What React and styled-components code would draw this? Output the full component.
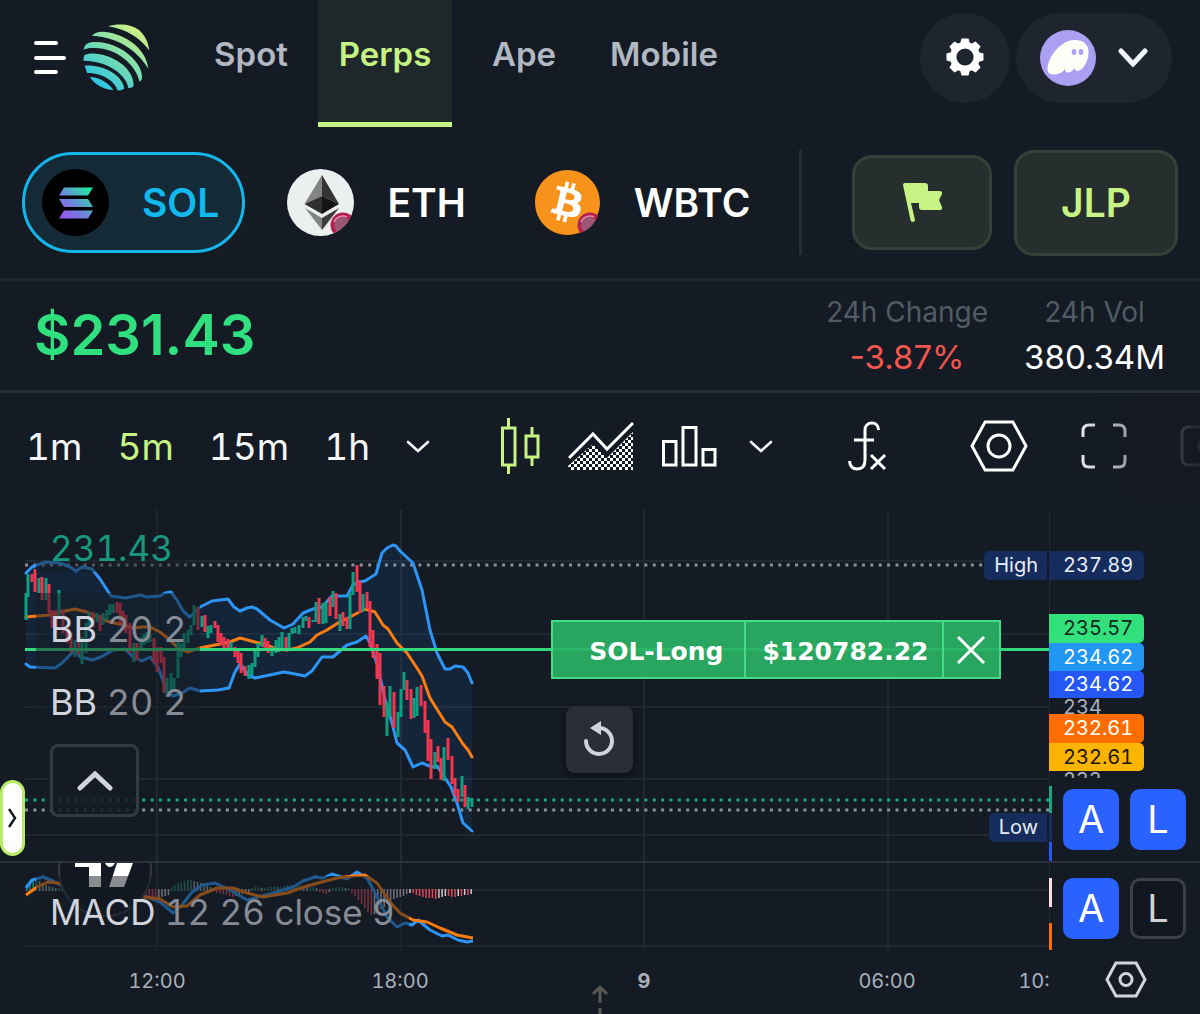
import React from 'react';
import styled, { createGlobalStyle } from 'styled-components';
import { FaBitcoin } from 'react-icons/fa';

const GlobalStyle = createGlobalStyle`
  :root {
    --bg: #141b24;
    --lime: #c7f284;
    --grid: #202832;
    --blue: #2962ff;
    --up: #0f9f80;
    --down: #f23650;
    --muted: #b2b8c2;
  }

  * {
    box-sizing: border-box;
  }

  body {
    margin: 0;
    background: var(--bg);
    color: #fff;
    font-family: Inter, 'Liberation Sans', sans-serif;
    font-optical-sizing: none;
  }

  button {
    font: inherit;
    color: inherit;
    background: none;
    border: 0;
    padding: 0;
    margin: 0;
    cursor: pointer;
  }

  a {
    color: inherit;
    text-decoration: none;
  }

  svg {
    display: block;
    flex-shrink: 0;
  }
`;

const Page = styled.div`
  display: flex;
  flex-direction: column;
  overflow: hidden;
`;

/* Header */

const Header = styled.header`
  display: flex;
  align-items: flex-start;
  height: 127px;
  padding: 0 28px 0 33px;
`;

const Brand = styled.div`
  display: flex;
  align-items: center;
  gap: 16px;
  height: 115px;
  margin-right: 34px;
`;

const Nav = styled.nav`
  display: grid;
  grid-template-columns: 134px 134px 144px 136px;
`;

const NavLink = styled.a`
  display: flex;
  align-items: center;
  justify-content: center;
  height: 127px;
  padding-bottom: 15px;
  border-bottom: 5px solid ${({ $active }) => ($active ? 'var(--lime)' : 'transparent')};
  background: ${({ $active }) => ($active ? '#1e282b' : 'transparent')};
  color: ${({ $active }) => ($active ? 'var(--lime)' : 'var(--muted)')};
  font-size: 33px;
  font-weight: 600;
`;

const Actions = styled.div`
  display: flex;
  align-items: center;
  gap: 6px;
  height: 115px;
  margin-left: auto;
`;

const RoundButton = styled.button`
  display: flex;
  align-items: center;
  justify-content: center;
  gap: 22px;
  width: ${({ $wide }) => ($wide ? '156px' : '90px')};
  height: 90px;
  border-radius: 45px;
  background: #1e252f;
`;

/* Token row */

const TokenRow = styled.div`
  display: flex;
  align-items: center;
  height: 154px;
  padding: 2px 22px;
  border-bottom: 3px solid #1e262f;
`;

const Tokens = styled.div`
  display: flex;
  gap: 22px;
`;

const Token = styled.button`
  display: flex;
  align-items: center;
  gap: 33px;
  height: 101px;
  padding: 0 23px 0 17px;
  border: 3px solid ${({ $active }) => ($active ? '#15b5ea' : 'transparent')};
  border-radius: 51px;
  background: ${({ $active }) => ($active ? '#142b37' : 'transparent')};
  color: ${({ $active }) => ($active ? '#12b9ee' : '#fff')};
  font-size: 39px;
  font-weight: 600;
`;

const TokenActions = styled.div`
  display: flex;
  align-items: center;
  gap: 22px;
  margin-left: auto;
`;

const Divider = styled.span`
  width: 3px;
  height: 105px;
  margin-right: 28px;
  background: #252d37;
`;

const LimeButton = styled.button`
  display: flex;
  align-items: center;
  justify-content: center;
  width: ${({ $large }) => ($large ? '164px' : '140px')};
  height: ${({ $large }) => ($large ? '106px' : '95px')};
  border: 3px solid #364038;
  border-radius: 20px;
  background: #262f2d;
  color: var(--lime);
  font-size: 39px;
  font-weight: 600;
`;

/* Price row */

const PriceRow = styled.section`
  display: flex;
  align-items: center;
  justify-content: space-between;
  height: 112px;
  padding: 0 35px 2px 34px;
  border-bottom: 3px solid #262e37;
`;

const Price = styled.h1`
  margin: 0;
  color: #30e07e;
  font-size: 56px;
  font-weight: 600;
`;

const Stats = styled.div`
  display: flex;
  gap: 36px;
  line-height: 45px;
`;

const Stat = styled.div`
  display: flex;
  flex-direction: column;
  align-items: center;
`;

const StatLabel = styled.span`
  color: #515b66;
  font-size: 28px;
`;

const StatValue = styled.span`
  color: ${({ $down }) => ($down ? '#f3554f' : '#fff')};
  font-size: 33px;
`;

/* Chart toolbar */

const Toolbar = styled.div`
  position: relative;
  display: flex;
  align-items: center;
  height: 117px;
  padding: 0 0 11px 26px;
  overflow: hidden;

  &::after {
    content: '';
    position: absolute;
    top: 0;
    right: 0;
    width: 120px;
    height: 106px;
    background: linear-gradient(to right, rgb(20 24 33 / 0), rgb(20 24 33 / 0.9));
    pointer-events: none;
  }
`;

const ToolGroup = styled.div`
  display: flex;
  align-items: center;
  flex-shrink: 0;
  gap: ${({ $gap }) => $gap};
  width: ${({ $width }) => $width};
`;

const Interval = styled.button`
  color: ${({ $active }) => ($active ? 'var(--lime)' : '#f4f5f7')};
  font-size: 37px;
  font-variant-numeric: tabular-nums;
`;

/* Chart */

const ChartGrid = styled.main`
  position: relative;
  display: grid;
  grid-template-columns: 1fr 151px;
  grid-template-rows: 353px 87px 64px;
  font-variant-numeric: tabular-nums;
`;

const Pane = styled.div`
  position: relative;
  overflow: hidden;
  border-bottom: ${({ $last }) => ($last ? '0' : '2px solid #2a313b')};

  > svg {
    width: 100%;
    height: 100%;
  }
`;

const Axis = styled.div`
  position: relative;
  box-shadow: inset 1px 0 #222a34;
  border-bottom: ${({ $last }) => ($last ? '0' : '2px solid #2a313b')};
`;

const Legend = styled.div`
  position: absolute;
  top: ${({ $top }) => $top};
  left: 36px;
  display: flex;
  flex-direction: column;
  align-items: flex-start;
`;

const LegendRow = styled.div`
  height: 73px;
  padding: 0 14px;
  background: rgb(20 27 36 / 0.5);
  color: #868b95;
  font-size: ${({ $compact }) => ($compact ? '35px' : '36px')};
  line-height: 73px;
  white-space: nowrap;

  b {
    color: #d1d4dc;
    font-weight: 400;
  }
`;

const LastPrice = styled(LegendRow)`
  height: 48px;
  margin-bottom: 21px;
  color: #18987f;
  line-height: 48px;
`;

const CollapseButton = styled.button`
  display: flex;
  align-items: center;
  justify-content: center;
  width: 89px;
  height: 73px;
  margin: 5px 0 0 14px;
  border: 3px solid #343a45;
  border-radius: 8px;
  background: rgb(20 27 36 / 0.85);
`;

const Order = styled.div`
  position: absolute;
  top: 110px;
  left: calc(50% + 26px);
  display: flex;
  height: 59px;
  background: rgb(42 178 101 / 0.92);
  font: bold 25px 'DejaVu Sans', sans-serif;
`;

const OrderCell = styled.div`
  display: flex;
  align-items: center;
  justify-content: flex-end;
  width: ${({ $width }) => $width};
  padding: 3px ${({ $first }) => ($first ? '20px' : '13px')} 0 0;
  border: 2px solid #45dc88;
  border-left-width: ${({ $first }) => ($first ? '2px' : '0')};
`;

const CloseOrder = styled.button`
  display: flex;
  align-items: center;
  justify-content: center;
  width: 57px;
  border: 2px solid #45dc88;
  border-left: 0;
`;

const ResetButton = styled.button`
  position: absolute;
  top: 196px;
  left: calc(50% + 41px);
  display: flex;
  align-items: center;
  justify-content: center;
  width: 67px;
  height: 67px;
  border-radius: 9px;
  background: #2a2e39;
  box-shadow: 0 3px 8px rgb(0 0 0 / 0.45);
`;

const RangeTag = styled.span`
  position: absolute;
  top: ${({ $top }) => $top};
  right: 2px;
  height: 29px;
  padding: 0 9px 0 10px;
  border-radius: 5px 0 0 5px;
  background: #152c5c;
  color: #e8edf7;
  font-size: 20px;
  line-height: 29px;
`;

const PriceTag = styled.span`
  position: absolute;
  top: ${({ $top }) => $top};
  left: 0;
  width: 95px;
  height: ${({ $height }) => $height || '29px'};
  padding-left: 14px;
  border-radius: 0 5px 5px 0;
  overflow: hidden;
  background: ${({ $bg }) => $bg || 'transparent'};
  color: ${({ $color }) => $color || '#fff'};
  font-size: 20px;
  line-height: ${({ $line }) => $line || '29px'};
`;

const AxisMark = styled.span`
  position: absolute;
  top: ${({ $top }) => $top};
  left: 0;
  width: 3px;
  height: ${({ $height }) => $height};
  background: ${({ $bg }) => $bg};
`;

const ScaleButtons = styled.div`
  position: absolute;
  top: ${({ $top }) => $top};
  left: 14px;
  display: flex;
  gap: 11px;
`;

const ScaleButton = styled.button`
  width: 56px;
  height: 61px;
  border: 3px solid ${({ $on }) => ($on ? 'var(--blue)' : '#3b3f4a')};
  border-radius: 10px;
  background: ${({ $on }) => ($on ? 'var(--blue)' : '#12161f')};
  color: ${({ $on }) => ($on ? '#fff' : '#cfd2da')};
  font-size: 38px;
  line-height: 55px;
`;

const TimeAxis = styled.div`
  position: relative;
  overflow: hidden;
`;

const TimeLabel = styled.span`
  position: absolute;
  top: 18px;
  left: ${({ $left }) => $left};
  transform: translateX(-50%);
  color: #aab0ba;
  font-size: 20px;
  font-weight: ${({ $bold }) => ($bold ? 700 : 400)};
  line-height: 26px;
`;

const ScrollHint = styled.svg`
  position: absolute;
  bottom: 0;
  left: 590px;
`;

const AxisCorner = styled.div`
  display: flex;
  align-items: flex-start;
  padding: 11px 0 0 56px;
`;

const DrawerHandle = styled.button`
  position: absolute;
  top: 270px;
  left: 0;
  display: flex;
  align-items: center;
  justify-content: center;
  width: 25px;
  height: 76px;
  border: 3px solid #b9ec66;
  border-radius: 13px;
  background: #fff;
`;

/* Icons */

const JupiterLogo = () => (
  <svg width="67" height="67" viewBox="190 43 200 200">
    <defs>
      <linearGradient id="jup" gradientUnits="userSpaceOnUse" x1="225" y1="230" x2="355" y2="60">
        <stop offset="0.05" stopColor="#2cc5e6" />
        <stop offset="0.5" stopColor="#76dcb0" />
        <stop offset="1" stopColor="#d0f084" />
      </linearGradient>
    </defs>
    <g fill="url(#jup)">
      <path d="M265 50C295 40 335 43 358 62C375 78 385 98 388 122C362 88 325 60 265 50Z" />
      <path d="M217 78C226 65 245 64 268 68C328 80 380 122 385 177C356 128 300 82 217 78Z" />
      <path d="M192 120C194 104 204 98 222 97C292 92 372 155 366 207L359 216C348 165 292 116 225 115C210 114 200 116 192 120Z" />
      <path d="M191 153L193 137C204 131 216 130 228 132C292 138 344 184 341 228Q334 236 325 233C319 196 266 154 191 153Z" />
      <path d="M195 167C252 164 309 196 313 236Q303 243 293 241C287 216 250 188 202 189Z" />
      <path d="M210 201C237 201 264 217 281 240C252 239 226 224 210 201Z" />
    </g>
  </svg>
);

const MenuIcon = () => (
  <svg width="34" height="36" fill="none" stroke="#fff" strokeWidth="4" strokeLinecap="round">
    <path d="M3 3H23M3 18H31M3 32H23" />
  </svg>
);

const GearIcon = () => (
  <svg width="38" height="40" viewBox="-19 -19 38 40">
    <circle r="11.800" fill="none" stroke="#fff" strokeWidth="6.400" />
    {[0, 45, 90, 135, 180, 225, 270, 315].map((angle) => (
      <path key={angle} d="M-5 -13L-3.500 -18.500H3.500L5 -13Z" fill="#fff" transform={`rotate(${angle})`} />
    ))}
  </svg>
);

const GhostAvatar = () => (
  <svg width="56" height="56">
    <circle cx="28" cy="28" r="28" fill="#ab9ff2" />
    <path
      d="M7.500 39C8 28 19 11 34 10C44 9.500 49 15 48.500 23C48 33 42 41 37.500 41C35.500 41 34.500 39.500 34.700 38C32.500 41 30 43 27.500 42.500C25.500 42 25 40.500 25.200 39C22 43 17 45 12 44.500C9 44 7.300 42 7.500 39Z"
      fill="#fffdf8"
    />
    <ellipse cx="34" cy="22" rx="2.300" ry="3" fill="#ab9ff2" />
    <ellipse cx="41" cy="22" rx="2.300" ry="3" fill="#ab9ff2" />
  </svg>
);

const Chevron = ({ width = 22, height = 11, weight = 2.6, color = '#f4f5f7', up }) => (
  <svg width={width + 4} height={height + 4} fill="none" stroke={color} strokeWidth={weight} strokeLinecap="round">
    <path
      d={
        up
          ? `M3 ${height + 1}L${width / 2 + 2} 3L${width + 1} ${height + 1}`
          : `M3 3L${width / 2 + 2} ${height + 1}L${width + 1} 3`
      }
    />
  </svg>
);

const SolIcon = () => (
  <svg width="67" height="67">
    <defs>
      <linearGradient id="sol" gradientUnits="userSpaceOnUse" x1="18" y1="50" x2="48" y2="18">
        <stop offset="0" stopColor="#a04cf5" />
        <stop offset="0.45" stopColor="#6f83dd" />
        <stop offset="1" stopColor="#19f39c" />
      </linearGradient>
    </defs>
    <circle cx="33.500" cy="33.500" r="33.500" fill="#000" />
    <path
      d="M22 18.500H51L46 26.500H17ZM17 30H46L51 38H22ZM22 41.500H51L46 49.500H17Z"
      fill="url(#sol)"
    />
  </svg>
);

const BridgeBadge = () => (
  <g>
    <circle cx="56" cy="56" r="12.500" fill="#b3204f" />
    <circle cx="55" cy="56" r="8" fill="#9c5674" />
    <path d="M47 53A9.500 9.500 0 0 1 60 48" fill="none" stroke="#e18aa6" strokeWidth="1.500" />
  </g>
);

const EthIcon = () => (
  <svg width="67" height="67">
    <clipPath id="coin">
      <circle cx="33.500" cy="33.500" r="33.500" />
    </clipPath>
    <g clipPath="url(#coin)">
      <rect width="67" height="67" fill="#eceff0" />
      <path d="M35 6V27L17.500 35Z" fill="#828384" />
      <path d="M35 6V27L52 35Z" fill="#343434" />
      <path d="M17.500 35L35 27V45Z" fill="#2f3030" />
      <path d="M52 35L35 27V45Z" fill="#141414" />
      <path d="M18 39L35 49V61Z" fill="#828384" />
      <path d="M52 39L35 49V61Z" fill="#3c3c3b" />
      <BridgeBadge />
    </g>
  </svg>
);

const BtcIcon = () => (
  <svg width="67" height="67">
    <g clipPath="url(#coin)">
      <rect x="4" y="4" width="59" height="59" rx="29" fill="#fff" />
      <FaBitcoin size={67} color="#f7931a" />
      <BridgeBadge />
    </g>
  </svg>
);

const FlagIcon = () => (
  <svg width="40" height="41" fill="var(--lime)">
    <path d="M1 3Q1 1 3 1H23Q26 1 26 4V9H37Q41 9 40 12L37 18L40 25Q41 28 38 28H20Q17 28 17 25V21H9L13 38Q13 40 10.500 40Q9 40 8.500 38Z" />
  </svg>
);

const CandlesIcon = () => (
  <svg width="40" height="56" fill="none" stroke="var(--lime)" strokeWidth="3">
    <path d="M2.500 10H15V47H2.500ZM8.500 0V9M8.500 48V56M26 18H38V39H26ZM32 9V17M32 40V48" />
  </svg>
);

const AreaIcon = () => (
  <svg width="66" height="49">
    <pattern id="checks" width="6" height="6" patternUnits="userSpaceOnUse">
      <path d="M0 0H3V3H0ZM3 3H6V6H3Z" fill="#fff" />
    </pattern>
    <path d="M0 48V44L25 22L39 36L65 10V48Z" fill="url(#checks)" />
    <path d="M1 36L25 12L39 27L65 1" fill="none" stroke="#fff" strokeWidth="3" />
  </svg>
);

const BarsIcon = () => (
  <svg width="55" height="41" fill="none" stroke="#fff" strokeWidth="3">
    <path d="M1.500 15.500H14V39H1.500ZM21 1.500H34V39H21ZM41 23.500H53V39H41Z" />
  </svg>
);

const FxIcon = () => (
  <svg width="39" height="50" fill="none" stroke="#fff" strokeWidth="3">
    <path d="M30.500 9C30.500 4 27 2 24 2C19.500 2 17 5 17 9V39C17 45 14 48 9 48C4.500 48 2 45 1.500 40M6 19H26M23 34L37 48M37 34L23 48" />
  </svg>
);

const HexIcon = ({ width = 58, height = 52, inner = 11, color = '#fff', weight = 3 }) => (
  <svg width={width} height={height} fill="none" stroke={color} strokeWidth={weight}>
    <path
      d={`M2 ${height / 2}L${width * 0.26} 2H${width * 0.74}L${width - 2} ${height / 2}L${width * 0.74} ${height - 2}H${width * 0.26}Z`}
    />
    <circle cx={width / 2} cy={height / 2} r={inner} />
  </svg>
);

const FullscreenIcon = () => (
  <svg width="46" height="46" fill="none" stroke="#e6e8ec" strokeWidth="3">
    <path d="M14 2H8Q2 2 2 8V14M32 2H38Q44 2 44 8V14M14 44H8Q2 44 2 38V32M32 44H38Q44 44 44 38V32" />
  </svg>
);

const CameraIcon = () => (
  <svg width="54" height="42" fill="none" stroke="#a0a5ae" strokeWidth="3">
    <rect x="2" y="2" width="50" height="38" rx="6" />
    <circle cx="27" cy="21" r="8" />
  </svg>
);

const ResetIcon = () => (
  <svg width="34" height="40" viewBox="0 0 34 40">
    <path d="M4 21A13 13 0 1 0 17 8" fill="none" stroke="#d1d4dc" strokeWidth="4" strokeLinecap="round" />
    <path d="M19 1V15L8 8Z" fill="#d1d4dc" />
  </svg>
);

const CloseIcon = () => (
  <svg width="28" height="28" stroke="#fff" strokeWidth="3">
    <path d="M1 1L27 27M27 1L1 27" />
  </svg>
);

/* Chart data */

const upperBand =
  '26,63 32,57 45,52 60,53 70,57 76,61 82,57 92,59 100,69 111,86 126,88 140,85 147,87 160,86 165,83 171,82 177,90 183,101 190,107 200,97 212,91 228,89 234,97 240,101 247,98 252,97 257,99 270,110 284,118 293,114 303,103 313,99 322,97 332,86 347,86 353,75 358,72 365,71 376,64 382,43 387,38 393,35 396,36 400,41 413,53 422,80 430,120 437,143 445,159 450,159 455,156 463,157 468,163 472,173';
const lowerBand =
  '26,154 30,157 55,158 62,153 75,140 80,147 93,150 103,146 113,140 125,139 133,147 142,151 150,147 158,157 167,182 173,186 182,183 190,178 200,181 218,180 229,178 235,162 240,154 248,165 255,168 270,165 284,162 295,164 305,166 312,161 322,147 333,147 347,135 357,132 366,126 370,133 378,157 385,190 392,213 397,233 405,240 413,257 422,253 432,257 437,256 443,265 451,277 457,293 463,313 472,321';
const basis =
  '26,107 37,106 50,105 60,102 75,99 87,102 100,108 110,112 123,115 133,118 143,117 150,117 160,122 170,130 178,138 187,142 200,138 220,134 230,132 240,128 255,132 263,134 277,139 287,140 297,138 310,132 317,125 327,120 338,113 350,107 365,99 375,102 383,115 388,119 397,133 407,143 417,158 422,166 430,188 445,212 452,217 463,234 468,240 472,247';

// [x, high, low, rising]
const candles = [
  [26, 83, 110, 1], [28, 64, 87, 1], [32, 64, 72, 0], [35, 59, 82, 0], [39, 68, 83, 1], [42, 67, 90, 0],
  [46, 68, 90, 1], [49, 74, 103, 0], [52, 100, 118, 0], [56, 100, 123, 0], [59, 80, 108, 1], [63, 99, 123, 0],
  [67, 115, 133, 0], [71, 123, 143, 0], [75, 130, 147, 1], [79, 125, 145, 0], [82, 127, 154, 1], [86, 113, 143, 1],
  [89, 102, 117, 1], [93, 102, 117, 0], [97, 103, 112, 1], [100, 105, 121, 0], [103, 103, 115, 1], [107, 100, 110, 1],
  [110, 94, 105, 1], [113, 94, 103, 1], [117, 92, 103, 0], [120, 93, 113, 0], [123, 101, 115, 0], [126, 105, 123, 0],
  [130, 113, 143, 0], [134, 133, 152, 1], [137, 133, 150, 0], [141, 127, 140, 1], [144, 124, 135, 1], [147, 122, 133, 1],
  [150, 125, 132, 1], [154, 128, 153, 0], [157, 137, 162, 0], [161, 137, 153, 0], [164, 147, 183, 0], [167, 168, 187, 1],
  [171, 163, 180, 1], [174, 168, 182, 1], [178, 132, 168, 1], [181, 133, 147, 1], [184, 123, 138, 1], [188, 120, 133, 1],
  [191, 115, 125, 1], [194, 95, 115, 1], [198, 97, 120, 0], [202, 106, 117, 1], [205, 105, 122, 0], [208, 116, 128, 1],
  [211, 115, 123, 1], [215, 111, 118, 0], [218, 115, 132, 0], [221, 123, 135, 0], [224, 127, 139, 0], [228, 129, 140, 0],
  [231, 132, 138, 1], [235, 137, 147, 0], [238, 141, 153, 0], [241, 143, 163, 0], [245, 156, 166, 0], [249, 155, 169, 1],
  [252, 153, 165, 1], [255, 140, 157, 1], [258, 133, 147, 1], [262, 125, 137, 1], [265, 128, 138, 0], [268, 131, 143, 0],
  [272, 137, 146, 1], [276, 130, 143, 1], [279, 127, 142, 1], [282, 122, 138, 1], [286, 127, 140, 0], [289, 123, 140, 1],
  [292, 118, 124, 1], [295, 117, 123, 1], [299, 115, 124, 1], [303, 107, 118, 1], [306, 106, 111, 1], [309, 107, 118, 0],
  [313, 110, 112, 1], [316, 92, 112, 1], [319, 88, 114, 0], [323, 93, 114, 1], [326, 92, 113, 1], [330, 87, 106, 0],
  [333, 81, 97, 1], [336, 83, 109, 0], [340, 104, 121, 1], [343, 102, 116, 0], [347, 107, 119, 0], [350, 83, 119, 1],
  [353, 62, 85, 1], [357, 55, 82, 0], [360, 71, 103, 0], [363, 84, 102, 1], [367, 82, 99, 0], [370, 91, 137, 0],
  [373, 120, 148, 0], [377, 134, 169, 0], [380, 143, 195, 0], [384, 176, 207, 0], [387, 192, 226, 1], [390, 176, 207, 1],
  [394, 182, 218, 0], [398, 202, 227, 1], [401, 179, 207, 1], [404, 162, 180, 1], [407, 170, 190, 0], [411, 179, 209, 0],
  [414, 188, 208, 1], [417, 177, 206, 1], [421, 175, 196, 0], [425, 191, 223, 0], [428, 210, 251, 0], [431, 229, 269, 0],
  [435, 242, 259, 1], [438, 236, 252, 0], [441, 248, 270, 0], [444, 237, 271, 1], [448, 228, 250, 0], [452, 246, 274, 0],
  [455, 268, 286, 0], [458, 279, 292, 0], [462, 266, 287, 1], [465, 275, 297, 0], [468, 287, 299, 1], [472, 288, 297, 1],
];

const macdLine =
  '26,25 32,17 43,14 53,18 66,25 80,29 147,34 160,39 173,50 182,42 192,29 202,22 215,20 230,27 247,37 258,34 277,29 293,24 303,18 315,14 323,15 332,11 347,16 357,9 367,15 375,30 387,54 397,64 405,60 412,62 418,57 430,67 442,73 448,72 458,77 467,79 473,78';
const signalLine =
  '26,32 37,24 48,19 58,20 80,27 145,34 160,36 173,44 187,43 200,32 217,25 233,25 247,30 263,34 287,30 307,23 337,15 353,13 365,12 377,20 390,39 400,50 413,57 427,59 440,65 457,72 473,75';

// Signed bar heights, positive values are above the zero line
const histogram = [
  6, 9, 11, 12, 9, 6, 5, 4, 3, 2, 2, 1, -2, -3, -4, -5, -6, -6, -5, -5, -4, -4, -3, -3, -3, -3, -4, -4, -5, -4, -3,
  -4, -4, -4, -5, -5, -5, -6, -7, -8, -9, -8, -7, -6, -5, 3, 5, 7, 8, 9, 10, 10, 9, 8, 7, 6, 5, 3, 2, -3, -3, -4,
  -5, -6, -7, -6, -5, -4, -3, -2, 2, 3, 3, 2, 2, 3, 3, 4, 3, 3, 4, 5, 5, 4, 5, 5, 4, 3, 3, 3, 2, -2, -3, -4, -2, 2,
  2, 3, 3, 2, 2, -3, -6, -10, -14, -18, -22, -25, -24, -22, -19, -17, -14, -12, -9, -8, -7, -6, -4, -3, -3, -5, -6,
  -7, -8, -8, -8, -9, -8, -7, -6, -6, -7, -7, -6, -6, -5, -5, -4,
];

const barColor = (value, previous) => {
  if (value > 0) return value >= previous ? '#26806f' : '#8fa8a6';
  return value <= previous ? '#d9485a' : '#d8c3c8';
};

const verticals = [157, 401, 644, 888];

const PricePlot = () => (
  <svg>
    <g stroke="var(--grid)" strokeWidth="2">
      {verticals.map((x) => (
        <line key={x} x1={x} x2={x} y1="0" y2="100%" />
      ))}
      {[51, 124, 197, 269, 325].map((y) => (
        <line key={y} x1="25" x2="100%" y1={y} y2={y} />
      ))}
    </g>
    <polygon
      points={`${upperBand} ${lowerBand.split(' ').reverse().join(' ')}`}
      fill="rgb(33 130 243 / 0.1)"
    />
    <g fill="none" strokeWidth="3" strokeDasharray="3 5.370">
      <line x1="25" x2="984" y1="55" y2="55" stroke="#8b919b" />
      <line x1="25" x2="100%" y1="290" y2="290" stroke="#16a685" />
      <line x1="25" x2="100%" y1="300" y2="300" stroke="#8b919b" />
    </g>
    <g fill="none" strokeWidth="3" strokeLinejoin="round" strokeLinecap="round">
      <polyline points={upperBand} stroke="#2d95f5" />
      <polyline points={lowerBand} stroke="#2d95f5" />
      <polyline points={basis} stroke="#fb7c12" />
    </g>
    {candles.map(([x, high, low, rising]) => (
      <rect
        key={x}
        x={x - 1.5}
        y={high}
        width="3"
        height={low - high}
        fill={rising ? 'var(--up)' : 'var(--down)'}
      />
    ))}
    <line x1="25" x2="100%" y1="139.500" y2="139.500" stroke="#36d87d" strokeWidth="3" />
  </svg>
);

const MacdPlot = () => (
  <svg>
    <g stroke="var(--grid)" strokeWidth="2">
      {verticals.map((x) => (
        <line key={x} x1={x} x2={x} y1="0" y2="100%" />
      ))}
      <line x1="25" x2="100%" y1="27" y2="27" />
      <line x1="25" x2="100%" y1="83" y2="83" />
    </g>
    {histogram.map((value, i) => (
      <rect
        key={i}
        x={26 + i * 3.22}
        y={value > 0 ? 27 - value : 26}
        width="1.500"
        height={Math.abs(value) + 1}
        fill={barColor(value, histogram[i - 1] || 0)}
      />
    ))}
    <g fill="none" strokeWidth="3" strokeLinejoin="round">
      <polyline points={macdLine} stroke="#2d95f5" />
      <polyline points={signalLine} stroke="#fb7c12" />
    </g>
    <circle cx="105" cy="7" r="46" fill="#131722" stroke="#363b47" strokeWidth="2" />
    <path d="M75 0H101V24H89V4H75ZM105 0H115Q113 4 110 4Q107 4 105 0ZM117 0H133L124 24H109Z" fill="#fff" />
  </svg>
);

const tokens = [
  { name: 'SOL', Icon: SolIcon, active: true },
  { name: 'ETH', Icon: EthIcon },
  { name: 'WBTC', Icon: BtcIcon },
];

function App() {
  return (
    <Page>
      <GlobalStyle />
      <Header>
        <Brand>
          <button type="button" aria-label="Menu">
            <MenuIcon />
          </button>
          <a href="#home" aria-label="Home">
            <JupiterLogo />
          </a>
        </Brand>
        <Nav>
          {['Spot', 'Perps', 'Ape', 'Mobile'].map((item) => (
            <NavLink key={item} href={`#${item.toLowerCase()}`} $active={item === 'Perps'}>
              {item}
            </NavLink>
          ))}
        </Nav>
        <Actions>
          <RoundButton type="button" aria-label="Settings">
            <GearIcon />
          </RoundButton>
          <RoundButton type="button" aria-label="Wallet" $wide>
            <GhostAvatar />
            <Chevron width={26} height={15} weight={5} color="#eef6ff" />
          </RoundButton>
        </Actions>
      </Header>

      <TokenRow>
        <Tokens>
          {tokens.map(({ name, Icon, active }) => (
            <Token key={name} type="button" $active={active}>
              <Icon />
              {name}
            </Token>
          ))}
        </Tokens>
        <TokenActions>
          <Divider />
          <LimeButton type="button" aria-label="Flag">
            <FlagIcon />
          </LimeButton>
          <LimeButton type="button" $large>
            JLP
          </LimeButton>
        </TokenActions>
      </TokenRow>

      <PriceRow>
        <Price>$231.43</Price>
        <Stats>
          <Stat>
            <StatLabel>24h Change</StatLabel>
            <StatValue $down>-3.87%</StatValue>
          </Stat>
          <Stat>
            <StatLabel>24h Vol</StatLabel>
            <StatValue>380.34M</StatValue>
          </Stat>
        </Stats>
      </PriceRow>

      <Toolbar>
        <ToolGroup $gap="35px" $width="474px">
          {['1m', '5m', '15m', '1h'].map((item) => (
            <Interval key={item} type="button" $active={item === '5m'}>
              {item}
            </Interval>
          ))}
          <button type="button" aria-label="More intervals">
            <Chevron />
          </button>
        </ToolGroup>
        <ToolGroup $gap="28px" $width="248px">
          <button type="button" aria-label="Candles">
            <CandlesIcon />
          </button>
          <button type="button" aria-label="Area">
            <AreaIcon />
          </button>
          <button type="button" aria-label="Columns">
            <BarsIcon />
          </button>
        </ToolGroup>
        <ToolGroup $gap="0" $width="100px">
          <button type="button" aria-label="More chart types">
            <Chevron />
          </button>
        </ToolGroup>
        <ToolGroup $gap="0" $width="122px">
          <button type="button" aria-label="Indicators">
            <FxIcon />
          </button>
        </ToolGroup>
        <ToolGroup $gap="53px" $width="270px">
          <button type="button" aria-label="Chart settings">
            <HexIcon />
          </button>
          <button type="button" aria-label="Fullscreen">
            <FullscreenIcon />
          </button>
          <button type="button" aria-label="Snapshot">
            <CameraIcon />
          </button>
        </ToolGroup>
      </Toolbar>

      <ChartGrid>
        <Pane>
          <PricePlot />
          <Legend $top="14px">
            <LastPrice $compact>231.43</LastPrice>
            <LegendRow>
              <b>BB</b> 20 2
            </LegendRow>
            <LegendRow>
              <b>BB</b> 20 2
            </LegendRow>
            <CollapseButton type="button" aria-label="Hide indicators">
              <Chevron width={32} height={16} weight={5} color="#d1d4dc" up />
            </CollapseButton>
          </Legend>
          <Order>
            <OrderCell $width="195px" $first>
              SOL-Long
            </OrderCell>
            <OrderCell $width="198px">$120782.22</OrderCell>
            <CloseOrder type="button" aria-label="Close position">
              <CloseIcon />
            </CloseOrder>
          </Order>
          <ResetButton type="button" aria-label="Reset chart">
            <ResetIcon />
          </ResetButton>
          <RangeTag $top="41px">High</RangeTag>
          <RangeTag $top="303px">Low</RangeTag>
        </Pane>
        <Axis>
          <PriceTag $top="41px" $bg="#152c5c" $color="#e8edf7">
            237.89
          </PriceTag>
          <PriceTag $top="104px" $bg="#32e07c" $color="#10261c">
            235.57
          </PriceTag>
          <PriceTag $top="133px" $height="28px" $bg="#2196f3">
            234.62
          </PriceTag>
          <PriceTag $top="161px" $height="27px" $line="27px" $bg="#2457f5">
            234.62
          </PriceTag>
          <PriceTag $top="188px" $height="16px" $line="18px" $color="#aab0ba">
            234
          </PriceTag>
          <PriceTag $top="204px" $bg="#ff6d00">
            232.61
          </PriceTag>
          <PriceTag $top="233px" $height="28px" $line="28px" $bg="#fbb400" $color="#1c1605">
            232.61
          </PriceTag>
          <PriceTag $top="261px" $height="7px" $line="18px" $color="#aab0ba">
            233
          </PriceTag>
          <AxisMark $top="276px" $height="27px" $bg="#16a685" />
          <AxisMark $top="303px" $height="29px" $bg="#152c5c" />
          <AxisMark $top="332px" $height="19px" $bg="#2457f5" />
          <ScaleButtons $top="279px">
            <ScaleButton type="button" $on>
              A
            </ScaleButton>
            <ScaleButton type="button" $on>
              L
            </ScaleButton>
          </ScaleButtons>
        </Axis>

        <Pane $last>
          <MacdPlot />
          <Legend $top="13px">
            <LegendRow $compact>
              <b>MACD</b> 12 26 close 9
            </LegendRow>
          </Legend>
        </Pane>
        <Axis $last>
          <AxisMark $top="15px" $height="29px" $bg="#fbdde0" />
          <AxisMark $top="60px" $height="27px" $bg="#ff6d00" />
          <ScaleButtons $top="15px">
            <ScaleButton type="button" $on>
              A
            </ScaleButton>
            <ScaleButton type="button">L</ScaleButton>
          </ScaleButtons>
        </Axis>

        <TimeAxis>
          <TimeLabel $left="157px">12:00</TimeLabel>
          <TimeLabel $left="400px">18:00</TimeLabel>
          <TimeLabel $left="644px" $bold>
            9
          </TimeLabel>
          <TimeLabel $left="887px">06:00</TimeLabel>
          <TimeLabel $left="1047px">10:00</TimeLabel>
          <ScrollHint width="20" height="31" fill="none" stroke="#5b5855" strokeWidth="3">
            <path d="M10 20V4M3 11L10 4L17 11M10 25V31" />
          </ScrollHint>
        </TimeAxis>
        <AxisCorner>
          <button type="button" aria-label="Axis settings">
            <HexIcon width={42} height={37} inner={6} color="#d1d4dc" />
          </button>
        </AxisCorner>
        <DrawerHandle type="button" aria-label="Open drawer">
          <svg width="9" height="20" fill="none" stroke="#141b24" strokeWidth="2.500">
            <path d="M1 1L7 10L1 19" />
          </svg>
        </DrawerHandle>
      </ChartGrid>
    </Page>
  );
}

export default App;
